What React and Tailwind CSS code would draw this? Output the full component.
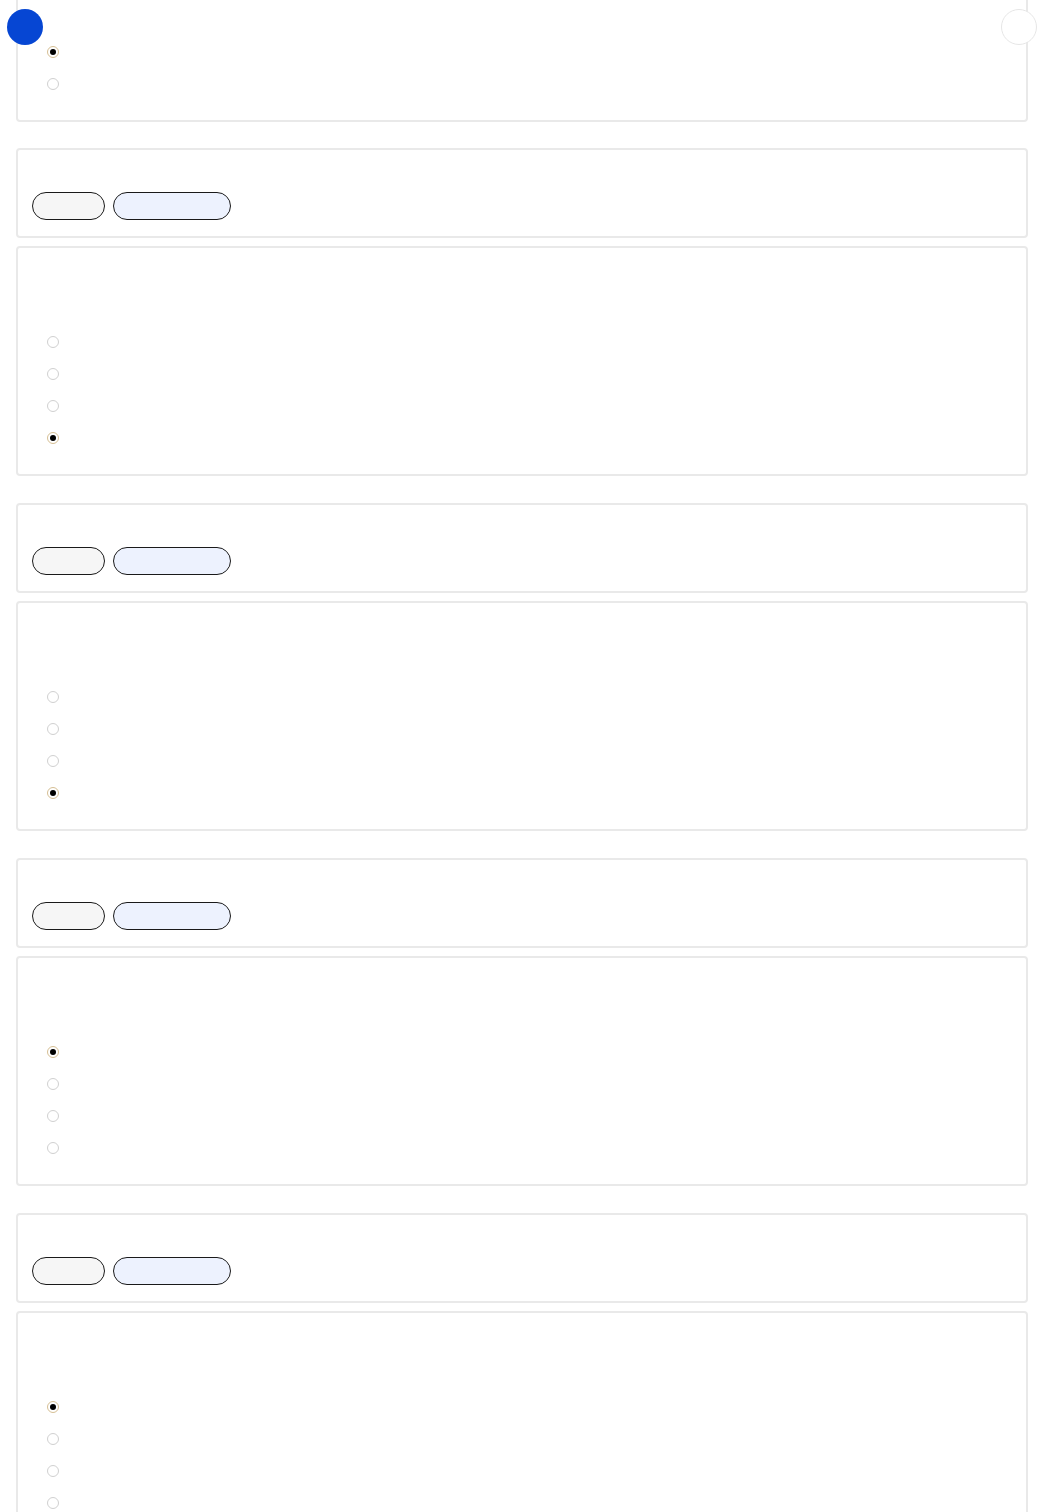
const groups = [
  { answer: 3 },
  { answer: 3 },
  { answer: 0 },
  { answer: 0 },
]

const Radio = ({ checked }) => (
  <span
    className={
      "flex h-[12px] w-[12px] items-center justify-center rounded-full border bg-white " +
      (checked ? "border-[#d6bf94]" : "border-[#d0d0d0]")
    }
  >
    {checked && <span className="h-[6px] w-[6px] rounded-full bg-black" />}
  </span>
)

const QuestionCard = ({ answer, options = 4, className = "pb-[20px]" }) => (
  <div className={"rounded-[4px] border-2 border-[#e9e9e9] bg-white pl-[29px] pt-[78px] " + className}>
    {Array.from({ length: options }).map((_, i) => (
      <div key={i} className="flex h-[32px] items-center">
        <Radio checked={i === answer} />
      </div>
    ))}
  </div>
)

const HeaderCard = () => (
  <div className="h-[90px] rounded-[4px] border-2 border-[#e9e9e9] bg-white pl-[14px] pt-[42px]">
    <div className="flex gap-[8px]">
      <span className="h-[28px] w-[73px] rounded-full border border-[#1a1a1a] bg-[#f6f6f6]" />
      <span className="h-[28px] w-[118px] rounded-full border border-[#1a1a1a] bg-[#edf2fe]" />
    </div>
  </div>
)

export default function App() {
  return (
    <div className="min-h-screen bg-white px-[16px] font-['Liberation_Sans',sans-serif]">
      <div className="flex flex-col">
        <QuestionCard answer={0} options={2} className="-mt-[44px] pb-[20px]" />
        {groups.map((g, i) => (
          <div key={i} className={(i === 0 ? "mt-[26px]" : "mt-[27px]") + " flex flex-col gap-[8px]"}>
            <HeaderCard />
            <QuestionCard answer={g.answer} />
          </div>
        ))}
      </div>

      <div className="fixed left-[7px] top-[9px] h-[36px] w-[36px] rounded-full bg-[#0646d3]" />
      <div className="fixed left-[1001px] top-[9px] h-[36px] w-[36px] rounded-full border border-[#e6e6e6] bg-white" />
    </div>
  )
}
